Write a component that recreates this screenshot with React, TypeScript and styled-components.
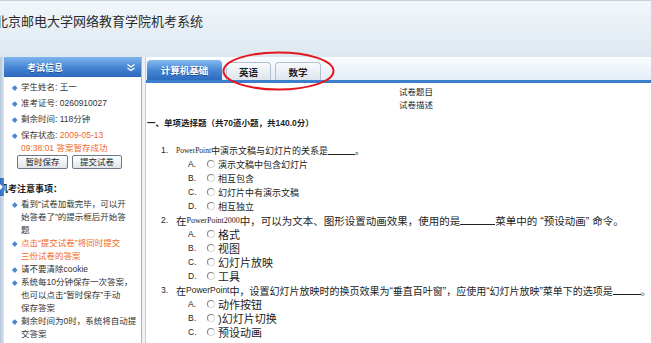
import React from "react";
import styled, { createGlobalStyle } from "styled-components";

const FONT = `"Liberation Sans", "Noto Sans CJK SC", sans-serif`;

const GlobalStyle = createGlobalStyle`
  html, body { margin: 0; padding: 0; background: #fff; }
  body { font-family: ${FONT}; color: #222; overflow: hidden; }
  * { box-sizing: border-box; }
`;

const Page = styled.div`
  position: relative;
  width: 651px;
  height: 343px;
  overflow: hidden;
  display: flex;
  flex-direction: column;
  background: #fff;
`;

const Header = styled.header`
  flex: 0 0 57px;
  display: flex;
  align-items: flex-start;
  border-top: 1px solid #c9d3dc;
  background: linear-gradient(#f2f7fa, #dce8f0);
  padding-top: 12px;
`;

const Title = styled.h1`
  margin: 0 0 0 -5px;
  font-size: 13px;
  line-height: 17px;
  font-weight: normal;
  color: #2a2a2a;
  white-space: nowrap;
`;

const Body = styled.div`
  flex: 1;
  min-height: 0;
  display: flex;
`;

const LeftStrip = styled.div`
  position: relative;
  z-index: 2;
  flex: 0 0 4px;
  display: flex;
  flex-direction: column;
  background: linear-gradient(to right, #b4c6da, #dde7f0);
`;

const Handle = styled.div`
  margin-top: 121px;
  height: 18px;
  background: linear-gradient(to right, #2f6cbc, #4f8ad6);
  display: flex;
  align-items: center;
  &::after {
    content: "";
    border-left: 3px solid #fff;
    border-top: 3px solid transparent;
    border-bottom: 3px solid transparent;
  }
`;

const Sidebar = styled.aside`
  flex: 0 0 138px;
  display: flex;
  flex-direction: column;
  background: #fff;
  border-right: 1px solid #a9b6c4;
  font-size: 8.5px;
  color: #333;
`;

const PanelHeader = styled.div`
  height: 20px;
  display: flex;
  align-items: center;
  justify-content: space-between;
  padding: 0 5px 0 23px;
  background: linear-gradient(#7db4ec, #4584d3 55%, #2c69be);
  color: #fff;
  font-weight: bold;
  font-size: 9px;
  text-shadow: 0 1px 0 #1d4f92;
`;

const InfoList = styled.ul`
  list-style: none;
  margin: 0;
  padding: 4px 0 0 17px;
  display: flex;
  flex-direction: column;
  gap: 3px;
  line-height: 13px;
`;

const Bulleted = styled.li<{ $orange?: boolean }>`
  position: relative;
  color: ${(p) => (p.$orange ? "#f06a1c" : "#333")};
  white-space: nowrap;
  &::before {
    content: "";
    position: absolute;
    left: -8px;
    top: 4.5px;
    width: 3.5px;
    height: 3.5px;
    background: #4b86cb;
    transform: rotate(45deg);
  }
`;

const Orange = styled.span`
  color: #f06a1c;
`;

const ButtonRow = styled.div`
  display: flex;
  gap: 4px;
  padding-left: 13px;
`;

const SmallButton = styled.button<{ $w: number }>`
  width: ${(p) => p.$w}px;
  height: 14px;
  padding: 0;
  font-family: ${FONT};
  font-size: 8.5px;
  line-height: 12px;
  color: #222;
  border: 1px solid #6d7986;
  border-radius: 2px;
  background: linear-gradient(#ffffff, #dfe5ea);
`;

const NotesTitle = styled.div`
  margin: 14px 0 0 -5px;
  font-weight: bold;
  font-size: 9px;
  line-height: 13px;
  color: #222;
  white-space: nowrap;
`;

const NotesList = styled.ul`
  list-style: none;
  margin: 2px 0 0;
  padding: 0 0 0 17px;
  line-height: 13px;
`;

const Splitter = styled.div`
  flex: 0 0 4px;
  background: #eef2f6;
  border-right: 1px solid #c5cfd9;
`;

const Main = styled.main`
  flex: 1;
  min-width: 0;
  display: flex;
  flex-direction: column;
`;

const TabBar = styled.div`
  height: 26px;
  flex: none;
  display: flex;
  align-items: flex-end;
  gap: 4px;
  padding-left: 1px;
  background: linear-gradient(#fbfdfe, #e2edf6);
  border-bottom: 3px solid #3c7ecc;
`;

const Tab = styled.div<{ $active?: boolean; $w: number }>`
  width: ${(p) => p.$w}px;
  height: ${(p) => (p.$active ? 20 : 18)}px;
  display: flex;
  align-items: center;
  justify-content: center;
  border-radius: 4px 4px 0 0;
  font-weight: bold;
  font-size: 9.5px;
  ${(p) =>
    p.$active
      ? `
    background: linear-gradient(#84baf0, #4584d3 55%, #2d6bc0);
    color: #fff;
    text-shadow: 0 1px 0 #1d4f92;
  `
      : `
    background: linear-gradient(#f8fafc, #dde5ed);
    border: 1px solid #b3c1cf;
    border-bottom: none;
    color: #222;
  `}
`;

const Content = styled.div`
  padding-top: 3px;
  color: #1d1d1d;
`;

const ExamHead = styled.div`
  padding-left: 253px;
  font-size: 8.5px;
  line-height: 13px;
`;

const SectionTitle = styled.div`
  margin-top: 5px;
  padding-left: 1px;
  font-size: 8.5px;
  font-weight: bold;
  line-height: 13px;
  white-space: nowrap;
`;

const Questions = styled.div`
  margin-top: 13px;
  display: flex;
  flex-direction: column;
`;

const QRow = styled.div<{ $size: number }>`
  height: 14px;
  display: flex;
  align-items: center;
  padding-left: 15px;
  white-space: nowrap;
  font-size: ${(p) => p.$size}px;
`;

const QNum = styled.span`
  flex: 0 0 15px;
  font-size: 8.5px;
`;

const ORow = styled.div<{ $size: number }>`
  height: 14px;
  display: flex;
  align-items: center;
  padding-left: 42px;
  white-space: nowrap;
  font-size: ${(p) => p.$size}px;
`;

const OLetter = styled.span`
  flex: 0 0 19px;
  font-size: 8.5px;
`;

const Radio = styled.span`
  flex: none;
  width: 8px;
  height: 8px;
  margin-right: 3px;
  border-radius: 50%;
  border: 1px solid;
  border-color: #858585 #dadada #dadada #858585;
  background: #fff;
`;

const Latin = styled.span<{ $size: number; $serif?: boolean }>`
  font-family: ${(p) => (p.$serif ? `"Liberation Serif", serif` : `"Liberation Sans", sans-serif`)};
  font-size: ${(p) => p.$size}px;
`;

const Blank = styled.span<{ $w: number }>`
  display: inline-block;
  width: ${(p) => p.$w}px;
  height: 1px;
  background: #222;
  align-self: flex-end;
  margin-bottom: 2px;
`;

const Annotation = styled.svg`
  position: absolute;
  left: 222px;
  top: 51px;
  width: 113px;
  height: 40px;
  pointer-events: none;
`;

const Chevron = () => (
  <svg width="10" height="9" viewBox="0 0 10 9">
    <polyline points="1.5,1.5 5,4 8.5,1.5" fill="none" stroke="#fff" strokeWidth="1.4" />
    <polyline points="1.5,5 5,7.5 8.5,5" fill="none" stroke="#fff" strokeWidth="1.4" />
  </svg>
);

type Opt = { letter: string; text: string };

const Options = ({ items, size }: { items: Opt[]; size: number }) => (
  <>
    {items.map((o) => (
      <ORow key={o.letter} $size={size}>
        <OLetter>{o.letter}</OLetter>
        <Radio />
        <span>{o.text}</span>
      </ORow>
    ))}
  </>
);

export default function App() {
  return (
    <>
      <GlobalStyle />
      <Page>
        <Header>
          <Title>北京邮电大学网络教育学院机考系统</Title>
        </Header>
        <Body>
          <LeftStrip>
            <Handle />
          </LeftStrip>
          <Sidebar>
            <PanelHeader>
              <span>考试信息</span>
              <Chevron />
            </PanelHeader>
            <InfoList>
              <Bulleted>学生姓名: 王一</Bulleted>
              <Bulleted>准考证号: 0260910027</Bulleted>
              <Bulleted>剩余时间: 118分钟</Bulleted>
              <Bulleted>
                保存状态: <Orange>2009-05-13</Orange>
                <br />
                <Orange>09:38:01 答案暂存成功</Orange>
              </Bulleted>
            </InfoList>
            <ButtonRow>
              <SmallButton $w={51}>暂时保存</SmallButton>
              <SmallButton $w={50}>提交试卷</SmallButton>
            </ButtonRow>
            <NotesTitle>机考注意事项：</NotesTitle>
            <NotesList>
              <Bulleted>
                看到“试卷加载完毕，可以开
                <br />
                始答卷了”的提示框后开始答
                <br />
                题
              </Bulleted>
              <Bulleted $orange>
                点击“提交试卷”将同时提交
                <br />
                三份试卷的答案
              </Bulleted>
              <Bulleted>请不要清除cookie</Bulleted>
              <Bulleted>
                系统每10分钟保存一次答案，
                <br />
                也可以点击“暂时保存”手动
                <br />
                保存答案
              </Bulleted>
              <Bulleted>
                剩余时间为0时，系统将自动提
                <br />
                交答案
              </Bulleted>
            </NotesList>
          </Sidebar>
          <Splitter />
          <Main>
            <TabBar>
              <Tab $active $w={75}>计算机基础</Tab>
              <Tab $w={45}>英语</Tab>
              <Tab $w={46}>数学</Tab>
            </TabBar>
            <Content>
              <ExamHead>
                试卷题目
                <br />
                试卷描述
              </ExamHead>
              <SectionTitle>一、单项选择题（共70道小题，共140.0分）</SectionTitle>
              <Questions>
                <QRow $size={9}>
                  <QNum>1.</QNum>
                  <Latin $size={7.5} $serif>PowerPoint</Latin>
                  中演示文稿与幻灯片的关系是
                  <Blank $w={27} />。
                </QRow>
                <Options
                  size={9}
                  items={[
                    { letter: "A.", text: "演示文稿中包含幻灯片" },
                    { letter: "B.", text: "相互包含" },
                    { letter: "C.", text: "幻灯片中有演示文稿" },
                    { letter: "D.", text: "相互独立" },
                  ]}
                />
                <QRow $size={10.5}>
                  <QNum>2.</QNum>
                  在<Latin $size={8} $serif>PowerPoint2000</Latin>
                  中，可以为文本、图形设置动画效果，使用的是
                  <Blank $w={35} />
                  菜单中的 “预设动画” 命令。
                </QRow>
                <Options
                  size={11}
                  items={[
                    { letter: "A.", text: "格式" },
                    { letter: "B.", text: "视图" },
                    { letter: "C.", text: "幻灯片放映" },
                    { letter: "D.", text: "工具" },
                  ]}
                />
                <QRow $size={10}>
                  <QNum>3.</QNum>
                  在<Latin $size={8.5}>PowerPoint</Latin>
                  中，设置幻灯片放映时的换页效果为“垂直百叶窗”，应使用“幻灯片放映”菜单下的选项是
                  <Blank $w={28} />。
                </QRow>
                <Options
                  size={11}
                  items={[
                    { letter: "A.", text: "动作按钮" },
                    { letter: "B.", text: ")幻灯片切换" },
                    { letter: "C.", text: "预设动画" },
                  ]}
                />
              </Questions>
            </Content>
          </Main>
        </Body>
        <Annotation viewBox="0 0 113 40">
          <ellipse cx="56.5" cy="20" rx="55" ry="18.5" fill="none" stroke="#e3161d" strokeWidth="2" />
        </Annotation>
      </Page>
    </>
  );
}
